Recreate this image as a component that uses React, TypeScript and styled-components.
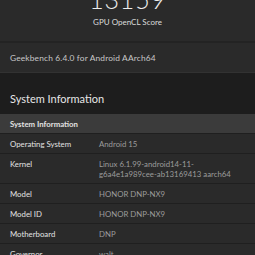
import * as React from "react";
import styled, { createGlobalStyle } from "styled-components";

const GlobalStyle = createGlobalStyle`
  html, body {
    margin: 0;
    padding: 0;
    background: #1d1d1d;
    overflow: hidden;
  }
  body {
    font-family: Lato, "Noto Sans", "Liberation Sans", sans-serif;
    -webkit-font-smoothing: antialiased;
  }
`;

const Page = styled.div`
  width: 255px;
  display: flex;
  flex-direction: column;
`;

const ScoreCard = styled.div`
  margin-top: -13px;
  background: #2a2a2a;
  display: flex;
  flex-direction: column;
  align-items: center;
  padding-bottom: 14px;
  border-bottom: 2px solid #232323;
`;

const Score = styled.div`
  font-size: 25px;
  line-height: 25px;
  font-weight: 300;
  color: #ececec;
  letter-spacing: 0.8px;
`;

const ScoreLabel = styled.div`
  margin-top: 5px;
  font-size: 8px;
  line-height: 10px;
  color: #dcdcdc;
`;

const VersionRow = styled.div`
  background: #2a2a2a;
  height: 29px;
  display: flex;
  align-items: center;
  padding: 0 10px;
  font-size: 8.4px;
  letter-spacing: 0.15px;
  color: #c8c8c8;
  border-bottom: 1px solid #323232;
`;

const SectionTitle = styled.div`
  padding: 19px 10px 8px;
  font-size: 11px;
  line-height: 14px;
  color: #e6e6e6;
`;

const Table = styled.div`
  display: flex;
  flex-direction: column;
`;

const Row = styled.div<{ $head?: boolean }>`
  display: flex;
  padding: 5px 10px 4px;
  background: ${(p) => (p.$head ? "#3b3b3b" : "#2a2a2a")};
  border-bottom: 1px solid #1f1f1f;
  font-size: 7.8px;
  line-height: 10px;
`;

const Label = styled.div<{ $head?: boolean }>`
  width: 89px;
  flex-shrink: 0;
  color: #e2e2e2;
  font-weight: ${(p) => (p.$head ? 700 : 400)};
`;

const Value = styled.div`
  flex: 1;
  color: #9c9c9c;
`;

const rows: [string, React.ReactNode][] = [
  ["Operating System", "Android 15"],
  [
    "Kernel",
    <>
      Linux 6.1.99-android14-11-
      <br />
      g6a4e1a989cee-ab13169413 aarch64
    </>,
  ],
  ["Model", "HONOR DNP-NX9"],
  ["Model ID", "HONOR DNP-NX9"],
  ["Motherboard", "DNP"],
  ["Governor", "walt"],
];

export default function App() {
  return (
    <Page>
      <GlobalStyle />
      <ScoreCard>
        <Score>13159</Score>
        <ScoreLabel>GPU OpenCL Score</ScoreLabel>
      </ScoreCard>
      <VersionRow>Geekbench 6.4.0 for Android AArch64</VersionRow>
      <SectionTitle>System Information</SectionTitle>
      <Table>
        <Row $head>
          <Label $head>System Information</Label>
        </Row>
        {rows.map(([k, v]) => (
          <Row key={k}>
            <Label>{k}</Label>
            <Value>{v}</Value>
          </Row>
        ))}
      </Table>
    </Page>
  );
}
